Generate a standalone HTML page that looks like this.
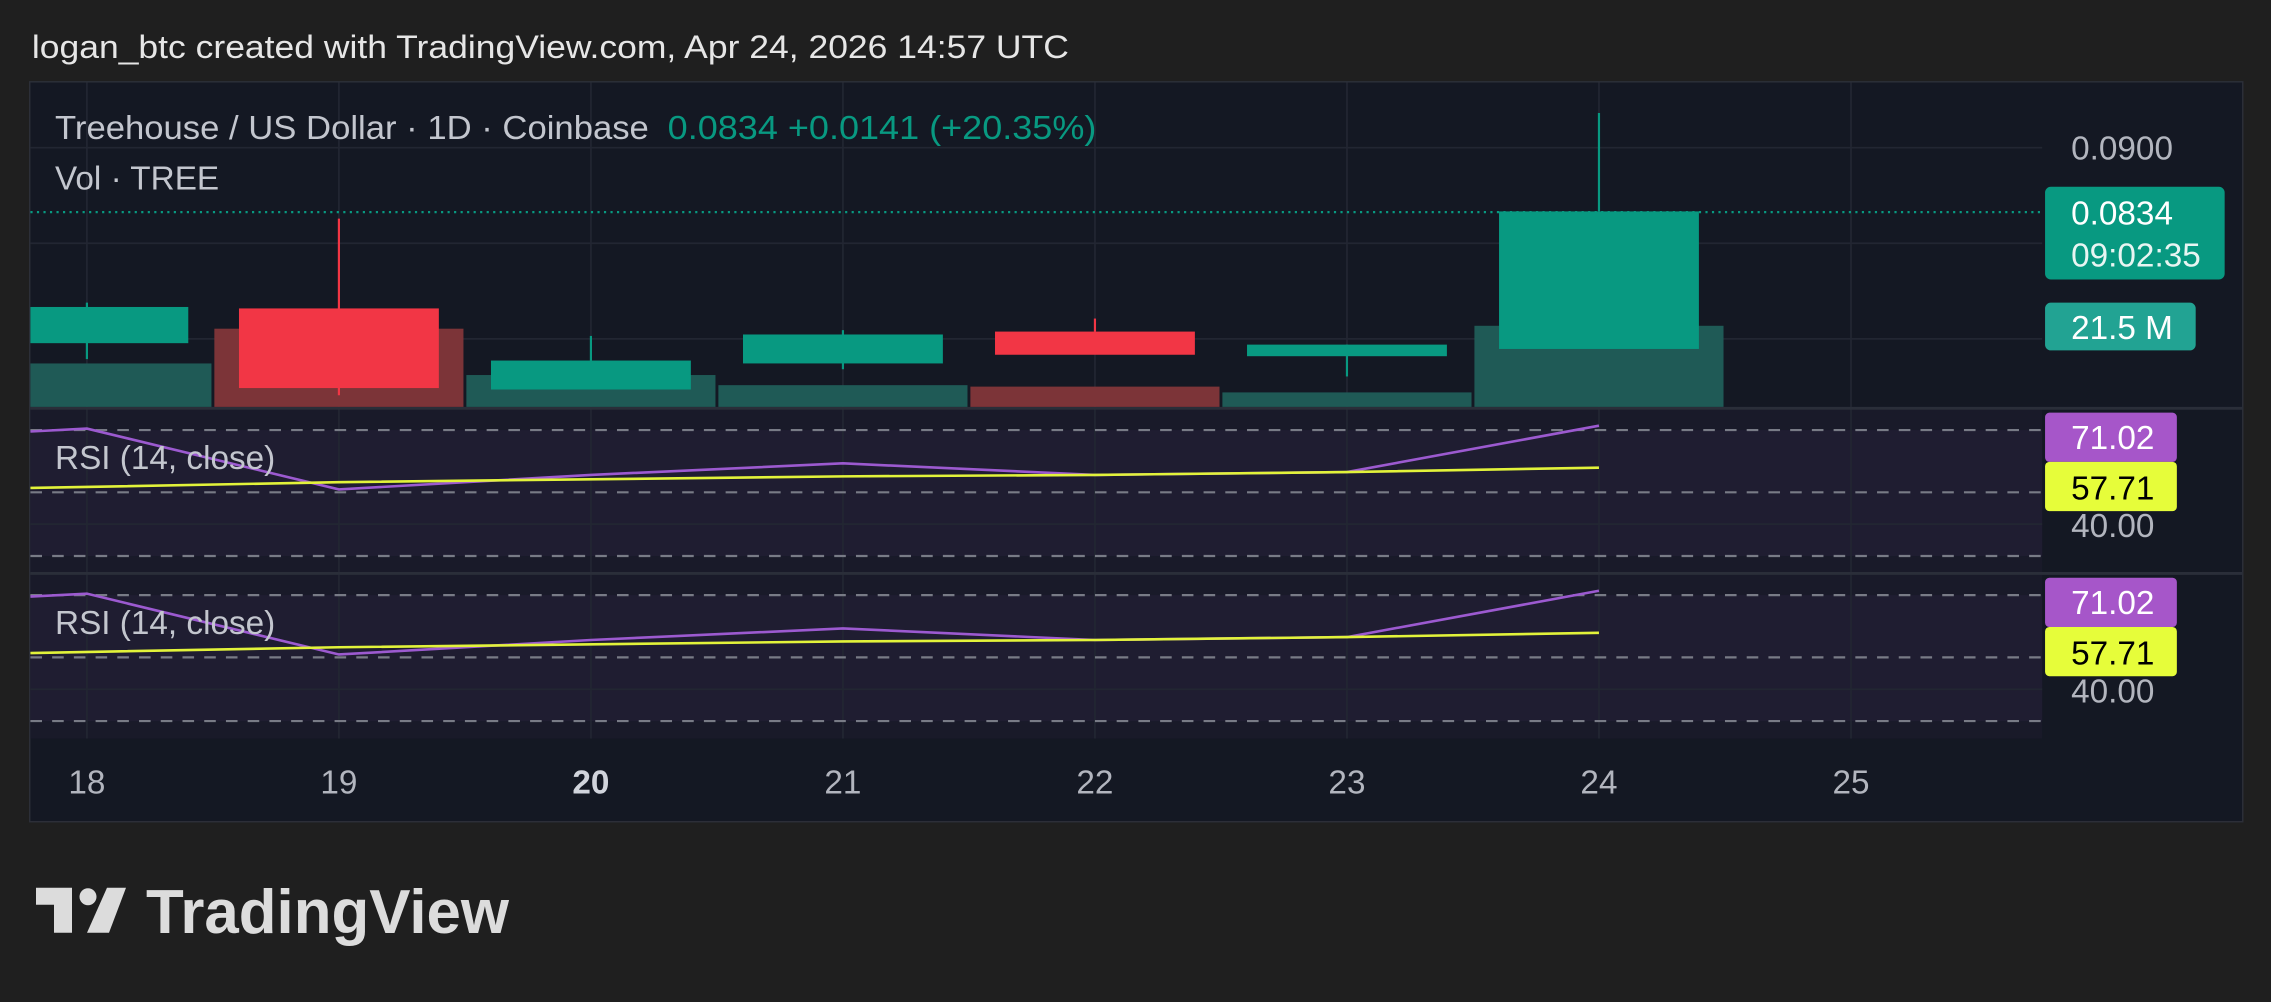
<!DOCTYPE html>
<html><head><meta charset="utf-8"><style>
html,body{margin:0;padding:0;background:#1f1f1f;overflow:hidden}
svg{display:block}
text{font-family:"Liberation Sans",sans-serif}
</style></head><body>
<svg width="2271" height="1002" viewBox="0 0 1568 692" preserveAspectRatio="none" xmlns="http://www.w3.org/2000/svg">
<rect width="1568" height="692" fill="#1f1f1f"/>
<text x="22" y="40" font-size="22.5" fill="#e6e6e6" textLength="716" lengthAdjust="spacingAndGlyphs">logan_btc created with TradingView.com, Apr 24, 2026 14:57 UTC</text>
<rect x="20.5" y="56.5" width="1528" height="511" fill="#141823" stroke="#2c2f38"/>
<rect x="21" y="283" width="1389" height="113" fill="#191a29"/>
<rect x="21" y="297" width="1389" height="87" fill="#1f1d31"/>
<rect x="21" y="397" width="1389" height="113" fill="#191a29"/>
<rect x="21" y="411" width="1389" height="87" fill="#1f1d31"/>
<g stroke="#222632" stroke-width="1.2">
<line x1="60" y1="57" x2="60" y2="510"/><line x1="234" y1="57" x2="234" y2="510"/><line x1="408" y1="57" x2="408" y2="510"/><line x1="582" y1="57" x2="582" y2="510"/><line x1="756" y1="57" x2="756" y2="510"/><line x1="930" y1="57" x2="930" y2="510"/><line x1="1104" y1="57" x2="1104" y2="510"/><line x1="1278" y1="57" x2="1278" y2="510"/>
<line x1="21" y1="102" x2="1410" y2="102"/><line x1="21" y1="168" x2="1410" y2="168"/><line x1="21" y1="234" x2="1410" y2="234"/>
<line x1="21" y1="362" x2="1410" y2="362"/><line x1="21" y1="476" x2="1410" y2="476"/>
</g>
<g stroke="#2a2e39" stroke-width="2"><line x1="21" y1="282" x2="1548" y2="282"/><line x1="21" y1="396" x2="1548" y2="396"/></g>
<g>
<rect x="21" y="251" width="125" height="30" fill="#1f5a56"/>
<rect x="148" y="227" width="172" height="54" fill="#7c3438"/>
<rect x="322" y="259" width="172" height="22" fill="#1f5a56"/>
<rect x="496" y="266" width="172" height="15" fill="#1f5a56"/>
<rect x="670" y="267" width="172" height="14" fill="#7c3438"/>
<rect x="844" y="271" width="172" height="10" fill="#1f5a56"/>
<rect x="1018" y="225" width="172" height="56" fill="#1f5a56"/>
</g>
<g stroke-width="1.5">
<line x1="60" y1="209" x2="60" y2="248" stroke="#089981"/><rect x="21" y="212" width="109" height="25" fill="#089981"/>
<line x1="234" y1="151" x2="234" y2="273" stroke="#f23645"/><rect x="165" y="213" width="138" height="55" fill="#f23645"/>
<line x1="408" y1="232" x2="408" y2="249" stroke="#089981"/><rect x="339" y="249" width="138" height="20" fill="#089981"/>
<line x1="582" y1="228" x2="582" y2="255" stroke="#089981"/><rect x="513" y="231" width="138" height="20" fill="#089981"/>
<line x1="756" y1="220" x2="756" y2="229" stroke="#f23645"/><rect x="687" y="229" width="138" height="16" fill="#f23645"/>
<line x1="930" y1="238" x2="930" y2="260" stroke="#089981"/><rect x="861" y="238" width="138" height="8" fill="#089981"/>
<line x1="1104" y1="78" x2="1104" y2="146" stroke="#089981"/><rect x="1035" y="146" width="138" height="95" fill="#089981"/>
</g>
<line x1="21" y1="146.5" x2="1410" y2="146.5" stroke="#089981" stroke-width="1.5" stroke-dasharray="1.5 3"/>
<g stroke="#787b86" stroke-width="1.5" stroke-dasharray="8 7">
<line x1="21" y1="297" x2="1410" y2="297"/><line x1="21" y1="340" x2="1410" y2="340"/><line x1="21" y1="384" x2="1410" y2="384"/>
<line x1="21" y1="411" x2="1410" y2="411"/><line x1="21" y1="454" x2="1410" y2="454"/><line x1="21" y1="498" x2="1410" y2="498"/>
</g>
<g fill="none" stroke-width="1.8">
<polyline points="21,298 60,296 234,338 408,328 582,320 756,328 930,326 1104,294" stroke="#9c5ad0"/>
<polyline points="21,337 234,333 582,329 756,328 930,326 1104,323" stroke="#e2f33a"/>
<polyline points="21,412 60,410 234,452 408,442 582,434 756,442 930,440 1104,408" stroke="#9c5ad0"/>
<polyline points="21,451 234,447 582,443 756,442 930,440 1104,437" stroke="#e2f33a"/>
</g>
<text x="38" y="96" font-size="23" fill="#c3c6ce" textLength="410" lengthAdjust="spacingAndGlyphs">Treehouse / US Dollar · 1D · Coinbase</text>
<text x="461" y="96" font-size="23" fill="#089981" textLength="296" lengthAdjust="spacingAndGlyphs">0.0834  +0.0141 (+20.35%)</text>
<text x="38" y="131" font-size="23" fill="#c3c6ce">Vol · TREE</text>
<text x="38" y="324" font-size="23" fill="#c3c6ce">RSI (14, close)</text>
<text x="38" y="438" font-size="23" fill="#c3c6ce">RSI (14, close)</text>
<text x="1430" y="110" font-size="23" fill="#b2b5be">0.0900</text>
<rect x="1412" y="129" width="124" height="64" rx="4" fill="#089981"/>
<text x="1430" y="155" font-size="23" fill="#fff">0.0834</text>
<text x="1430" y="184" font-size="23" fill="#e8f5f2">09:02:35</text>
<rect x="1412" y="209" width="104" height="33" rx="4" fill="#22a393"/>
<text x="1430" y="234" font-size="23" fill="#fff">21.5 M</text>
<text x="1430" y="371" font-size="23" fill="#b2b5be">40.00</text>
<rect x="1412" y="285" width="91" height="34" rx="3" fill="#a656c9"/>
<text x="1430" y="310" font-size="23" fill="#fff">71.02</text>
<rect x="1412" y="319" width="91" height="34" rx="3" fill="#e6fd3a"/>
<text x="1430" y="345" font-size="23" fill="#000">57.71</text>
<text x="1430" y="485" font-size="23" fill="#b2b5be">40.00</text>
<rect x="1412" y="399" width="91" height="34" rx="3" fill="#a656c9"/>
<text x="1430" y="424" font-size="23" fill="#fff">71.02</text>
<rect x="1412" y="433" width="91" height="34" rx="3" fill="#e6fd3a"/>
<text x="1430" y="459" font-size="23" fill="#000">57.71</text>
<g font-size="23" fill="#b2b5be" text-anchor="middle">
<text x="60" y="548">18</text><text x="234" y="548">19</text><text x="408" y="548" font-weight="bold" fill="#d1d4dc">20</text><text x="582" y="548">21</text><text x="756" y="548">22</text><text x="930" y="548">23</text><text x="1104" y="548">24</text><text x="1278" y="548">25</text>
</g>
<g transform="scale(0.69044)" fill="#dcdcdc">
<path d="M36 888 H72 V933 H54 V905 H36 Z"/>
<circle cx="88" cy="897" r="8.5"/>
<path d="M107 888 H126 L109 933 H87 Z"/>
<text x="146" y="933" font-size="62" font-weight="bold" fill="#dcdcdc" textLength="363" lengthAdjust="spacingAndGlyphs">TradingView</text>
</g>
</svg>
</body></html>
